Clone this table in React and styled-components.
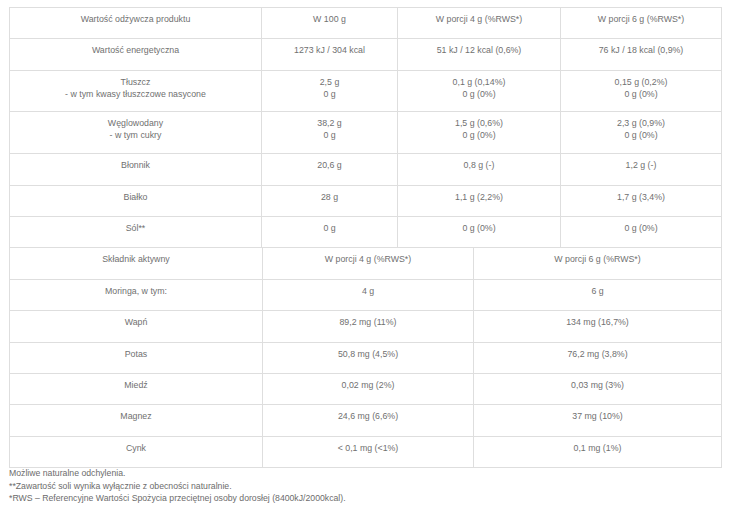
import React from "react";
import styled, { createGlobalStyle } from "styled-components";

const Global = createGlobalStyle`
  html, body { margin: 0; padding: 0; background: #ffffff; }
  body { font-family: "Liberation Sans", Arial, sans-serif; }
`;

const Page = styled.div`
  padding: 7px 9px 0 9px;
  width: 712px;
`;

const Table = styled.table`
  width: 712px;
  border-collapse: collapse;
  table-layout: fixed;
  font-family: "Liberation Sans", Arial, sans-serif;
  font-size: 8.8px;
  color: #707070;
  ${(p) => (p.$joined ? "tr:first-child td { border-top: none; }" : "")}
`;

const Row = styled.tr`
  height: ${(p) => (p.$lines === 2 ? 41.8 : 31.33)}px;
`;

const Cell = styled.td`
  border: 1px solid #dedede;
  padding: 5px 4px 0 4px;
  line-height: 12px;
  text-align: center;
  vertical-align: top;
  white-space: nowrap;
`;

const Notes = styled.div`
  margin-top: -1px;
  font-family: "Liberation Sans", Arial, sans-serif;
  font-size: 8.7px;
  line-height: 12.6px;
  color: #6c6c6c;
`;

const nutrition = [
  ["Wartość odżywcza produktu", "W 100 g", "W porcji 4 g (%RWS*)", "W porcji 6 g (%RWS*)"],
  ["Wartość energetyczna", "1273 kJ / 304 kcal", "51 kJ / 12 kcal (0,6%)", "76 kJ / 18 kcal (0,9%)"],
  [
    ["Tłuszcz", "- w tym kwasy tłuszczowe nasycone"],
    ["2,5 g", "0 g"],
    ["0,1 g (0,14%)", "0 g (0%)"],
    ["0,15 g (0,2%)", "0 g (0%)"],
  ],
  [
    ["Węglowodany", "- w tym cukry"],
    ["38,2 g", "0 g"],
    ["1,5 g (0,6%)", "0 g (0%)"],
    ["2,3 g (0,9%)", "0 g (0%)"],
  ],
  ["Błonnik", "20,6 g", "0,8 g (-)", "1,2 g (-)"],
  ["Białko", "28 g", "1,1 g (2,2%)", "1,7 g (3,4%)"],
  ["Sól**", "0 g", "0 g (0%)", "0 g (0%)"],
];

const active = [
  ["Składnik aktywny", "W porcji 4 g (%RWS*)", "W porcji 6 g (%RWS*)"],
  ["Moringa, w tym:", "4 g", "6 g"],
  ["Wapń", "89,2 mg (11%)", "134 mg (16,7%)"],
  ["Potas", "50,8 mg (4,5%)", "76,2 mg (3,8%)"],
  ["Miedź", "0,02 mg (2%)", "0,03 mg (3%)"],
  ["Magnez", "24,6 mg (6,6%)", "37 mg (10%)"],
  ["Cynk", "< 0,1 mg (<1%)", "0,1 mg (1%)"],
];

function CellContent({ value }) {
  if (Array.isArray(value)) {
    return value.map((line, i) => (
      <React.Fragment key={i}>
        {i > 0 && <br />}
        {line}
      </React.Fragment>
    ));
  }
  return value;
}

function DataTable({ rows, widths, joined }) {
  return (
    <Table $joined={joined}>
      <colgroup>
        {widths.map((w, i) => (
          <col key={i} style={{ width: w }} />
        ))}
      </colgroup>
      <tbody>
        {rows.map((row, r) => (
          <Row key={r} $lines={Array.isArray(row[0]) ? row[0].length : 1}>
            {row.map((v, c) => (
              <Cell key={c}>
                <CellContent value={v} />
              </Cell>
            ))}
          </Row>
        ))}
      </tbody>
    </Table>
  );
}

export default function App() {
  return (
    <>
      <Global />
      <Page>
        <DataTable rows={nutrition} widths={[252, 136, 163, 161]} />
        <DataTable rows={active} widths={[253, 211, 248]} joined />
        <Notes>
          Możliwe naturalne odchylenia.
          <br />
          **Zawartość soli wynika wyłącznie z obecności naturalnie.
          <br />
          *RWS – Referencyjne Wartości Spożycia przeciętnej osoby dorosłej (8400kJ/2000kcal).
        </Notes>
      </Page>
    </>
  );
}
